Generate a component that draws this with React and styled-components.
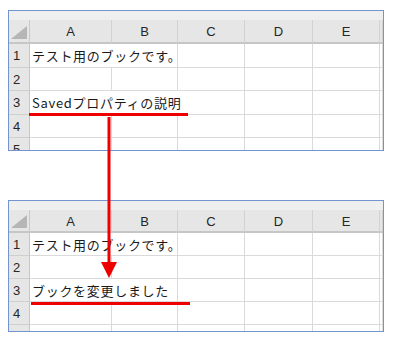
import React from 'react';
import styled, { createGlobalStyle } from 'styled-components';

const GlobalStyle = createGlobalStyle`
  html, body { margin: 0; padding: 0; background: #fff; }
  body { width: 393px; height: 337px; overflow: hidden; }
`;

const Page = styled.div`
  position: relative;
  width: 393px;
  height: 337px;
  padding: 10px 0 0 8px;
  box-sizing: border-box;
  display: flex;
  flex-direction: column;
  gap: 49px;
`;

const Panel = styled.div`
  position: relative;
  width: 376px;
  height: ${(p) => p.$height}px;
  box-sizing: border-box;
  border: 1px solid #7394cf;
  background: #fff;
  overflow: hidden;
`;

const Strip = styled.div`
  height: 9px;
  background: #efefef;
`;

const Sheet = styled.div`
  display: grid;
  grid-template-columns: 21px 82px 66px 67px 68px 67px 1fr;
  grid-template-rows: ${(p) => p.$rows};
`;

const ColHead = styled.div`
  background: #e6e6e6;
  border-right: 1px solid ${(p) => (p.$corner ? '#c9c9c9' : '#d2d2d2')};
  border-bottom: 2px solid #c6c6c6;
  display: flex;
  align-items: center;
  justify-content: center;
  font-family: 'Liberation Sans', Arial, sans-serif;
  font-size: 13px;
  color: #262626;
  position: relative;
  padding-top: 1px;
  box-sizing: border-box;
`;

const Corner = styled.span`
  position: absolute;
  right: 2px;
  bottom: 3px;
  width: 16px;
  height: 13px;
  background: #b6b6b6;
  clip-path: polygon(100% 0, 100% 100%, 0 100%);
`;

const RowHead = styled.div`
  background: #e6e6e6;
  border-right: 1px solid #c6c6c6;
  border-bottom: 1px solid #cfcfcf;
  display: flex;
  align-items: center;
  padding-left: 4px;
  box-sizing: border-box;
  font-family: 'Liberation Sans', Arial, sans-serif;
  font-size: 13px;
  color: #262626;
`;

const Cell = styled.div`
  grid-column: span ${(p) => p.$span || 1};
  border-right: 1px solid #dadada;
  border-bottom: 1px solid #dadada;
  box-sizing: border-box;
  display: flex;
  align-items: center;
  padding-left: 2px;
  white-space: nowrap;
  font-family: 'Noto Sans CJK JP', 'Liberation Sans', sans-serif;
  font-size: 13px;
  letter-spacing: 0.7px;
  color: #1a1a1a;
`;

const Underline = styled.div`
  position: absolute;
  top: ${(p) => p.$top}px;
  left: ${(p) => p.$left}px;
  width: 159px;
  height: 3px;
  background: #ee0000;
`;

const Arrow = styled.svg`
  position: absolute;
  left: 0;
  top: 0;
  pointer-events: none;
`;

const COLS = ['A', 'B', 'C', 'D', 'E'];

function Spreadsheet({ height, rows, rowHeights, headHeight, underline }) {
  return (
    <Panel $height={height}>
      <Strip />
      <Sheet $rows={[headHeight, ...rowHeights].map((h) => `${h}px`).join(' ')}>
        <ColHead $corner>
          <Corner />
        </ColHead>
        {COLS.map((c) => (
          <ColHead key={c}>{c}</ColHead>
        ))}
        <ColHead />
        {rows.map((row, i) => {
          const span = row.text ? row.span : 0;
          return (
            <React.Fragment key={i}>
              <RowHead>{i + 1}</RowHead>
              {row.text && <Cell $span={span}>{row.text}</Cell>}
              {Array.from({ length: 6 - (span || 0) }).map((_, j) => (
                <Cell key={j} />
              ))}
            </React.Fragment>
          );
        })}
      </Sheet>
      <Underline $top={underline.top} $left={underline.left} />
    </Panel>
  );
}

export default function App() {
  return (
    <>
      <GlobalStyle />
      <Page>
        <Spreadsheet
          height={141}
          headHeight={24}
          rowHeights={[24, 23, 24, 23, 24]}
          underline={{ top: 102, left: 20 }}
          rows={[
            { text: 'テスト用のブックです。', span: 2 },
            {},
            { text: 'Savedプロパティの説明', span: 3 },
            {},
            {},
          ]}
        />
        <Spreadsheet
          height={132}
          headHeight={23}
          rowHeights={[23, 23, 23, 23, 23]}
          underline={{ top: 101, left: 22 }}
          rows={[
            { text: 'テスト用のブックです。', span: 2 },
            {},
            { text: 'ブックを変更しました', span: 2 },
            {},
            {},
          ]}
        />
        <Arrow width="393" height="337" viewBox="0 0 393 337">
          <rect x="107.5" y="117" width="3" height="147" fill="#ee0000" />
          <polygon points="101,262 117,262 109,278" fill="#ee0000" />
        </Arrow>
      </Page>
    </>
  );
}
